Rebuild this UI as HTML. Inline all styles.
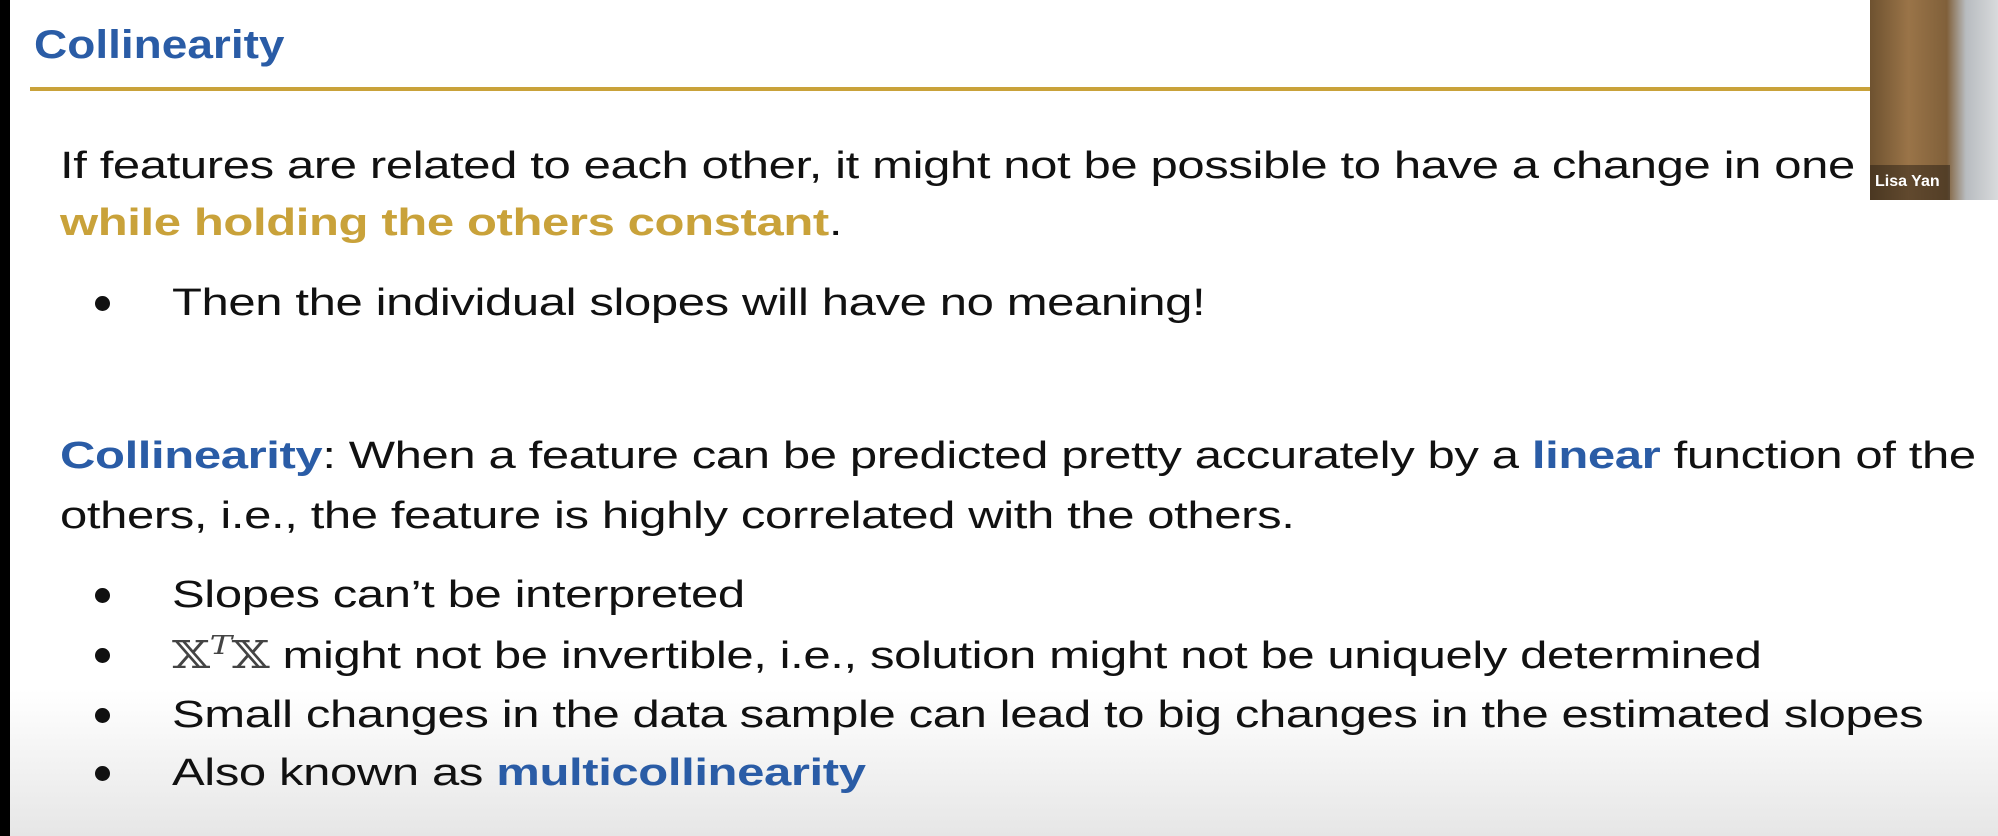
<!DOCTYPE html>
<html><head><meta charset="utf-8"><style>
html,body{margin:0;padding:0}
body{width:1998px;height:836px;position:relative;overflow:hidden;background:linear-gradient(#fff 0,#fff 690px,#e6e6e6 836px);font-family:"Liberation Sans",sans-serif;color:#111}
.l{position:absolute;white-space:nowrap;font-size:38px;line-height:46px;font-weight:300;letter-spacing:-0.3px;transform:scaleX(1.29);transform-origin:0 0}
.b{color:#2a5ca6;font-weight:bold}
.g{color:#c9a23a;font-weight:bold}
.dot{position:absolute;width:15px;height:15px;border-radius:50%;background:#111;left:95px}
.x{font-family:"DejaVu Serif",serif;color:#444;font-weight:normal}
sup{line-height:0;vertical-align:0;position:relative;top:-14px}
</style></head><body>
<div style="position:absolute;left:0;top:0;width:10px;height:836px;background:#000"></div>
<div style="position:absolute;left:34px;top:20px;font-size:40px;font-weight:bold;color:#2a5ca6;line-height:50px;transform:scaleX(1.15);transform-origin:0 0">Collinearity</div>
<div style="position:absolute;left:30px;top:87px;width:1845px;height:4px;background:#c9a23a"></div>
<div style="position:absolute;left:1870px;top:0;width:128px;height:200px;background:linear-gradient(90deg,#6e5230 0,#9a7448 30%,#80603a 60%,#b8bcc0 75%,#d8dadc 100%)"></div>
<div style="position:absolute;left:1870px;top:165px;width:80px;height:35px;background:rgba(40,30,20,.5)"></div>
<div style="position:absolute;left:1875px;top:172px;color:#fff;font-size:16px;font-weight:bold;line-height:20px">Lisa Yan</div>

<div class="l" style="left:60px;top:143px">If features are related to each other, it might not be possible to have a change in one</div>
<div class="l" style="left:60px;top:200px"><span class="g">while holding the others constant</span>.</div>
<div class="dot" style="top:296px"></div>
<div class="l" style="left:172px;top:280px">Then the individual slopes will have no meaning!</div>
<div class="l" style="left:60px;top:433px"><span class="b">Collinearity</span>: When a feature can be predicted pretty accurately by a <span class="b">linear</span> function of the</div>
<div class="l" style="left:60px;top:493px">others, i.e., the feature is highly correlated with the others.</div>
<div class="dot" style="top:588px"></div>
<div class="l" style="left:172px;top:572px">Slopes can’t be interpreted</div>
<div class="dot" style="top:648px"></div>
<div class="l" style="left:172px;top:632px"><span class="x">𝕏<sup style="font-style:italic;font-size:26px">T</sup>𝕏</span> might not be invertible, i.e., solution might not be uniquely determined</div>
<div class="dot" style="top:708px"></div>
<div class="l" style="left:172px;top:692px">Small changes in the data sample can lead to big changes in the estimated slopes</div>
<div class="dot" style="top:766px"></div>
<div class="l" style="left:172px;top:750px">Also known as <span class="b">multicollinearity</span></div>
</body></html>
